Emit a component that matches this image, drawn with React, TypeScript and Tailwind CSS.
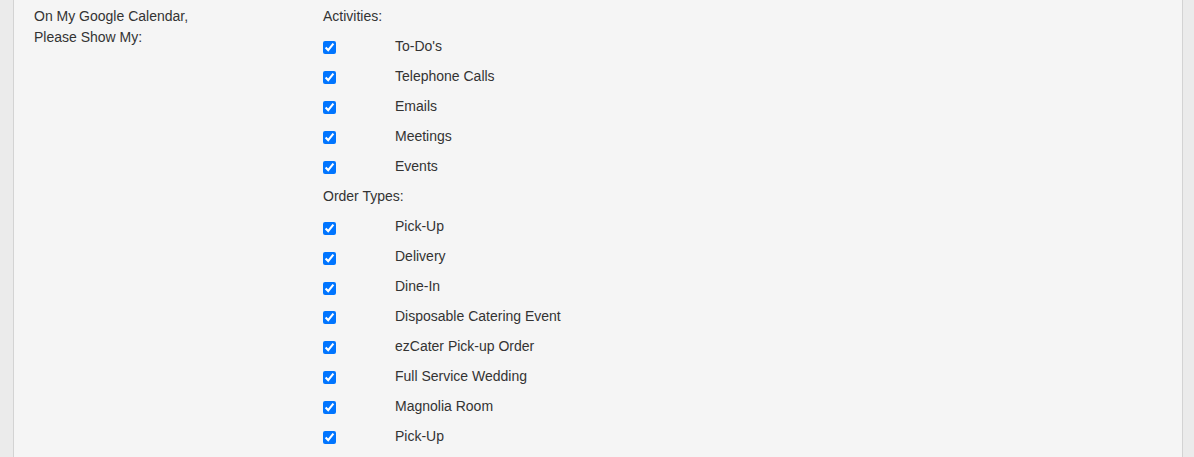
import React from "react";

const activities = ["To-Do's", "Telephone Calls", "Emails", "Meetings", "Events"];

const orderTypes = [
  { label: "Pick-Up", low: true },
  { label: "Delivery", low: true },
  { label: "Dine-In", low: true },
  { label: "Disposable Catering Event", low: false },
  { label: "ezCater Pick-up Order", low: false },
  { label: "Full Service Wedding", low: false },
  { label: "Magnolia Room", low: false },
  { label: "Pick-Up", low: false },
];

function CheckRow({ label, low = false }: { label: string; low?: boolean }) {
  return (
    <label className="flex h-[30px] items-center">
      <span className={`flex w-[72px] items-center ${low ? "pt-[5px]" : "pt-[2px]"}`}>
        <input
          type="checkbox"
          defaultChecked
          className="m-0 h-[13px] w-[13px] accent-[#0075ff]"
        />
      </span>
      <span>{label}</span>
    </label>
  );
}

export default function App() {
  return (
    <div className="min-h-[457px] bg-[#ebebeb] pl-[13px] pr-[11px]">
      <div
        className="flex min-h-[457px] border-x border-[#d3d3d3] bg-[#f5f5f5] pt-[1px] text-[14px] leading-[20px] text-[#333333]"
        style={{ fontFamily: '"Liberation Sans", Arial, sans-serif' }}
      >
        {/* left label column */}
        <div className="w-[309px] shrink-0 pl-[20px] pt-[5px] leading-[21px]">
          <div>On My Google Calendar,</div>
          <div>Please Show My:</div>
        </div>

        {/* options column */}
        <div className="flex flex-col">
          <div className="flex h-[30px] items-center">Activities:</div>
          {activities.map((a, i) => (
            <CheckRow key={"a" + i} label={a} />
          ))}
          <div className="flex h-[30px] items-center">Order Types:</div>
          {orderTypes.map((o, i) => (
            <CheckRow key={"o" + i} label={o.label} low={o.low} />
          ))}
        </div>
      </div>
    </div>
  );
}
